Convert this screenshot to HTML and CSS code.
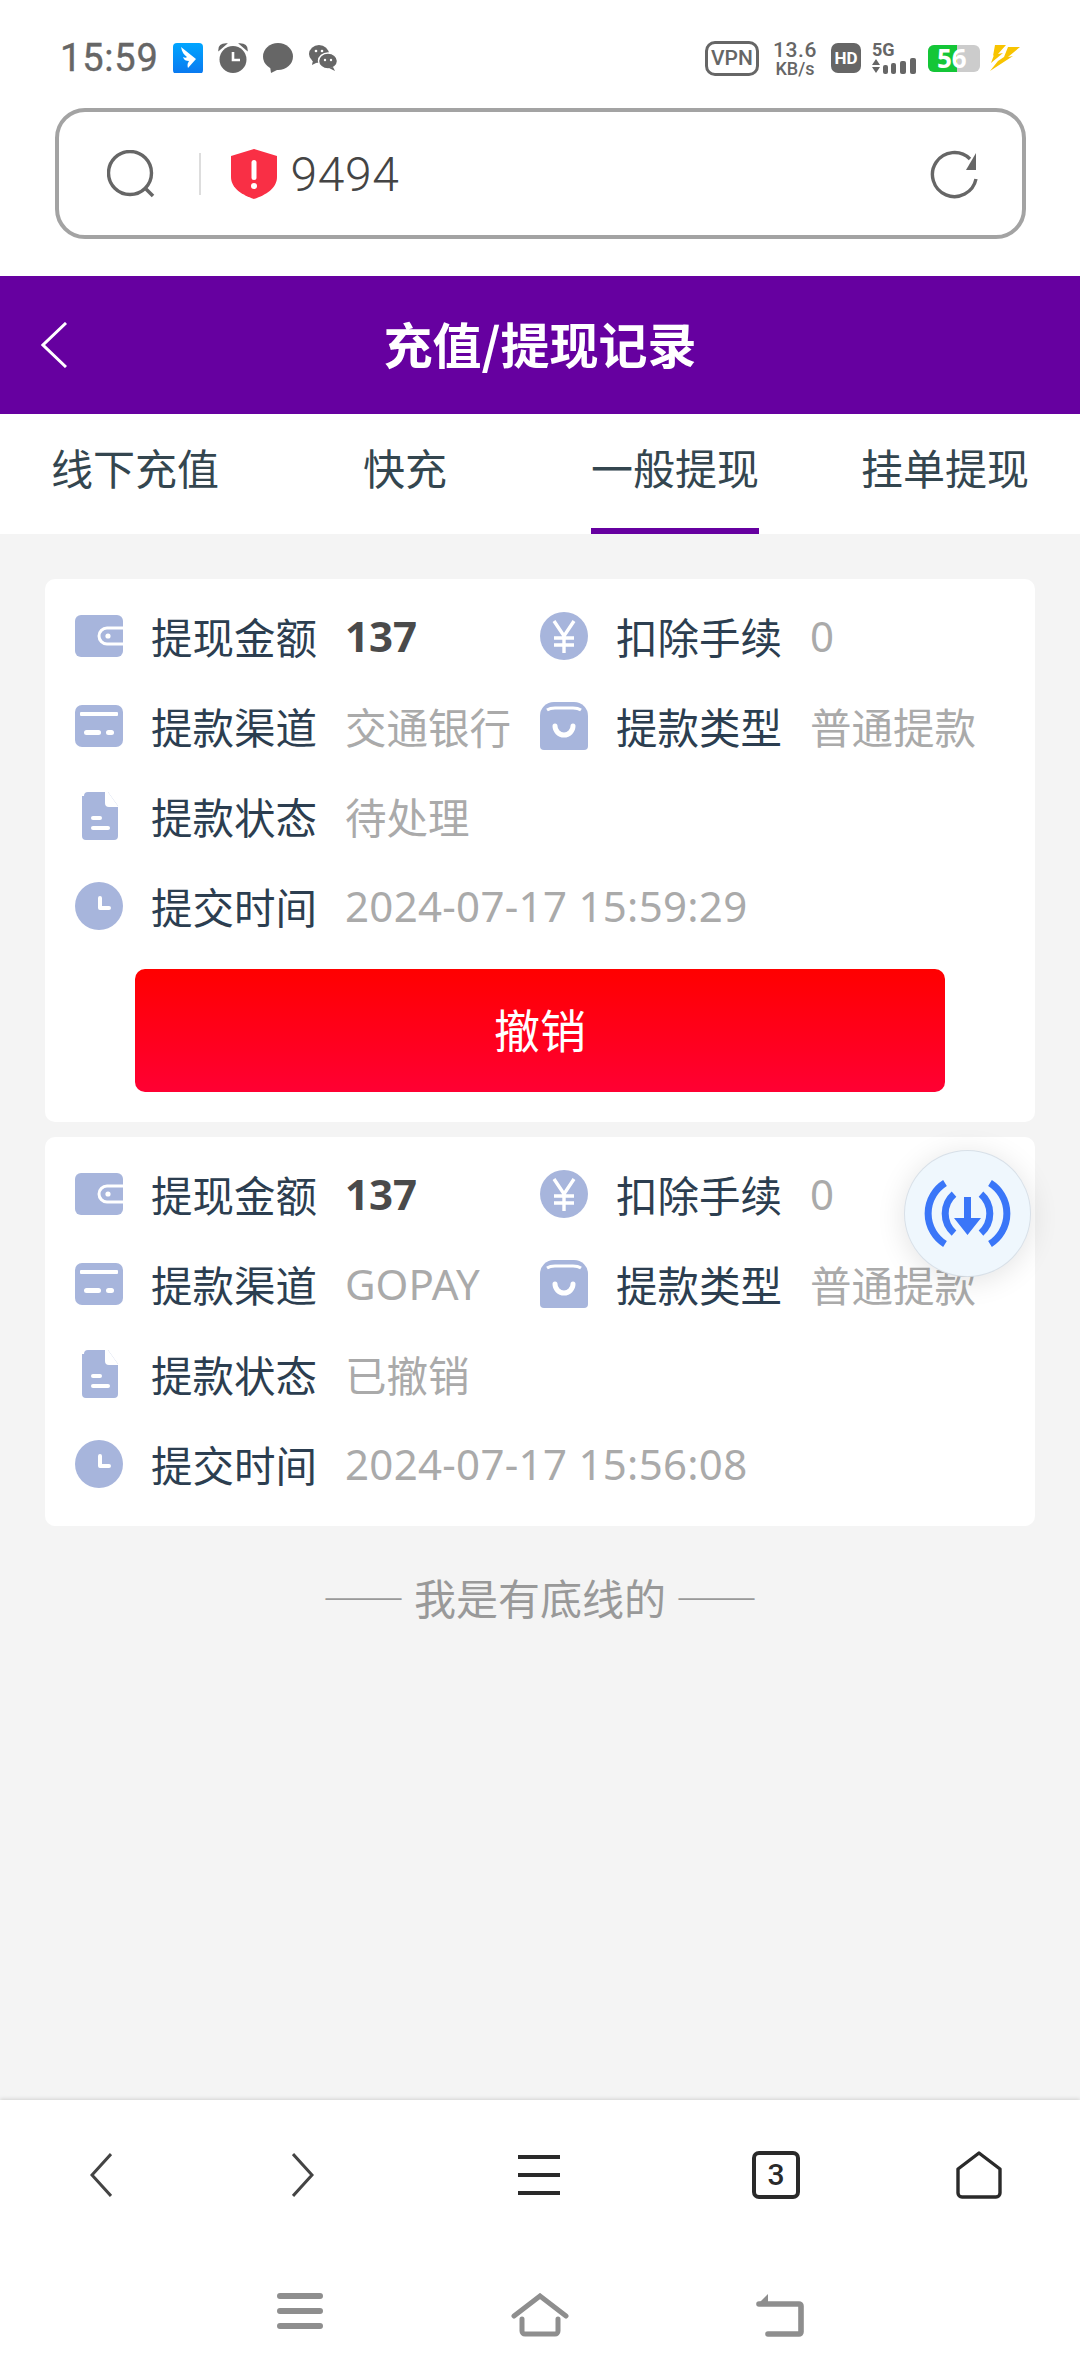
FILE: index.html
```html
<!DOCTYPE html>
<html lang="zh">
<head>
<meta charset="utf-8">
<title>充值/提现记录</title>
<link rel="stylesheet" href="styles.css">
</head>
<body>
<svg class="defs" width="0" height="0">
  <symbol id="i-wallet" viewBox="0 0 48 42">
    <rect width="48" height="42" rx="6" fill="#a7b5dc"/>
    <path d="M48 13H32a8 8 0 0 0 0 16h16" fill="none" stroke="#fff" stroke-width="3"/>
    <circle cx="33" cy="21" r="2.6" fill="#fff"/>
  </symbol>
  <symbol id="i-card" viewBox="0 0 48 42">
    <rect width="48" height="42" rx="7" fill="#a7b5dc"/>
    <rect x="5" y="7" width="38" height="4" rx="1" fill="#fff"/>
    <rect x="9" y="25" width="17" height="5" rx="2.5" fill="#fff"/>
    <rect x="31" y="25" width="8" height="5" rx="2.5" fill="#fff"/>
  </symbol>
  <symbol id="i-doc" viewBox="0 0 48 48">
    <path d="M9 4a4 4 0 0 1 4-4h20l10 14v30a4 4 0 0 1-4 4H11a4 4 0 0 1-4-4V4z" fill="#a7b5dc"/>
    <path d="M30 0h3l10 14v1H34a4 4 0 0 1-4-4z" fill="#fff"/>
    <rect x="16" y="24" width="11" height="4" rx="2" fill="#fff"/>
    <rect x="16" y="34" width="19" height="4" rx="2" fill="#fff"/>
  </symbol>
  <symbol id="i-clock" viewBox="0 0 48 48">
    <circle cx="24" cy="24" r="24" fill="#a7b5dc"/>
    <path d="M25 16v10h9" fill="none" stroke="#fff" stroke-width="4" stroke-linecap="round" stroke-linejoin="round"/>
  </symbol>
  <symbol id="i-yen" viewBox="0 0 48 48">
    <circle cx="24" cy="24" r="24" fill="#a7b5dc"/>
    <path d="M14 9l10 15L34 9M24 24v17M14 26h20M14 33h20" fill="none" stroke="#fff" stroke-width="3.4"/>
  </symbol>
  <symbol id="i-bag" viewBox="0 0 48 48">
    <path d="M14 0h20a14 14 0 0 1 14 14v30a4 4 0 0 1-4 4H4a4 4 0 0 1-4-4V14A14 14 0 0 1 14 0z" fill="#a7b5dc"/>
    <path d="M7 8c3-2 5-2 8-2h18c3 0 5 0 8 2" fill="none" stroke="#fff" stroke-width="3"/>
    <path d="M15 24a9 9 0 0 0 18 0" fill="none" stroke="#fff" stroke-width="5" stroke-linecap="round"/>
  </symbol>
</svg>

<header class="status">
  <div class="status-group">
    <span class="clock-text">15:59</span>
    <svg class="st-icon st-app" width="30" height="30" viewBox="0 0 30 30">
      <defs><linearGradient id="appg" x1="0" y1="0" x2="0" y2="1"><stop offset="0" stop-color="#00a6ff"/><stop offset="1" stop-color="#0a78f0"/></linearGradient></defs>
      <rect width="30" height="31" rx="4" fill="url(#appg)"/>
      <path d="M8 4l15 12-8 9c-1-4 0-5 1-7-3 0-5-1-6-4 2 1 3 1 4 0-3-2-5-5-6-10z" fill="#fff"/>
    </svg>
    <svg class="st-icon" width="30" height="30" viewBox="0 0 30 30">
      <circle cx="15" cy="16.5" r="13.5" fill="#666"/>
      <path d="M1 7c0-4 3-6 7-6L1 7zM29 7c0-4-3-6-7-6l7 6z" fill="#666" stroke="#666" stroke-width="1.4"/>
      <path d="M15 9v8h7" fill="none" stroke="#fff" stroke-width="2.6"/>
    </svg>
    <svg class="st-icon" width="30" height="30" viewBox="0 0 30 30">
      <ellipse cx="15" cy="13.5" rx="15" ry="13.5" fill="#666"/>
      <path d="M7 23l1 7 8-4z" fill="#666"/>
    </svg>
    <svg class="st-icon" width="30" height="30" viewBox="0 0 30 30">
      <ellipse cx="11" cy="11" rx="10" ry="9" fill="#666"/>
      <path d="M5 17l-1 5 6-3z" fill="#666"/>
      <ellipse cx="20" cy="18" rx="9.5" ry="8" fill="#666" stroke="#fff" stroke-width="1.4"/>
      <path d="M25 24l2 4-6-3z" fill="#666"/>
      <circle cx="8" cy="8" r="1.3" fill="#fff"/><circle cx="14" cy="8" r="1.3" fill="#fff"/>
      <circle cx="17" cy="17" r="1.2" fill="#fff"/><circle cx="23" cy="17" r="1.2" fill="#fff"/>
    </svg>
  </div>
  <div class="status-group status-right">
    <span class="vpn">VPN</span>
    <span class="speed"><b>13.6</b><i>KB/s</i></span>
    <span class="hd">HD</span>
    <span class="net">
      <span class="fiveg">5G</span>
      <svg width="45" height="16" viewBox="0 0 45 16">
        <path d="M0 7l4-6 4 6zM0 9h8l-4 6z" fill="#666"/>
        <rect x="11" y="7" width="5" height="9" rx="2" fill="#666"/>
        <rect x="19" y="5" width="5" height="11" rx="2" fill="#666"/>
        <rect x="28" y="3" width="6" height="13" rx="2" fill="#666"/>
        <rect x="38" y="0" width="6" height="16" rx="2" fill="#666"/>
      </svg>
    </span>
    <span class="battery"><span class="battery-fill"></span><span class="battery-num">56</span></span>
    <svg class="bolt" width="30" height="26" viewBox="0 0 30 26">
      <path d="M5 0h11L8 9l5-1L1 18l3-8-1 1z" fill="#f8c400"/>
      <path d="M18 2h12L18 12l5-1L0 26l8-10 6-4 4-1-4 1z" fill="#f8c400"/>
    </svg>
  </div>
</header>

<div class="address-wrap">
  <div class="address">
    <svg class="addr-search" width="48" height="48" viewBox="0 0 48 48">
      <circle cx="23" cy="23" r="21.5" fill="none" stroke="#666" stroke-width="3.4"/>
      <path d="M38 38l8 8" stroke="#666" stroke-width="3.6"/>
    </svg>
    <span class="addr-divider"></span>
    <svg class="addr-shield" width="46" height="50" viewBox="0 0 46 50">
      <path d="M23 0l23 7v21c0 11-11 18-23 22C11 46 0 39 0 28V7z" fill="#f92f45"/>
      <rect x="20.5" y="11" width="5" height="20" rx="2.5" fill="#fff"/>
      <circle cx="23" cy="37" r="3" fill="#fff"/>
    </svg>
    <span class="addr-text">9494</span>
    <svg class="addr-reload" width="48" height="50" viewBox="0 0 48 50">
      <path d="M46 30a22 22 0 1 1-6-20" fill="none" stroke="#666" stroke-width="3.4"/>
      <path d="M46 4v17H36z" fill="#666"/>
    </svg>
  </div>
</div>

<div class="titlebar">
  <svg class="title-back" width="26" height="46" viewBox="0 0 26 46">
    <path d="M25 1L2 23l23 22" fill="none" stroke="#fff" stroke-width="3"/>
  </svg>
  <h1 class="title">充值/提现记录</h1>
</div>

<nav class="tabs">
  <a class="tab">线下充值</a>
  <a class="tab">快充</a>
  <a class="tab tab-active">一般提现</a>
  <a class="tab">挂单提现</a>
</nav>

<main class="content">
  <section class="card">
    <div class="row">
      <div class="cell"><svg class="ic ic-short"><use href="#i-wallet"/></svg><span class="label">提现金额</span><span class="value value-strong">137</span></div>
      <div class="cell"><svg class="ic"><use href="#i-yen"/></svg><span class="label">扣除手续</span><span class="value">0</span></div>
    </div>
    <div class="row">
      <div class="cell"><svg class="ic ic-short"><use href="#i-card"/></svg><span class="label">提款渠道</span><span class="value value-cjk">交通银行</span></div>
      <div class="cell"><svg class="ic"><use href="#i-bag"/></svg><span class="label">提款类型</span><span class="value value-cjk">普通提款</span></div>
    </div>
    <div class="row">
      <div class="cell"><svg class="ic"><use href="#i-doc"/></svg><span class="label">提款状态</span><span class="value value-cjk">待处理</span></div>
    </div>
    <div class="row">
      <div class="cell"><svg class="ic"><use href="#i-clock"/></svg><span class="label">提交时间</span><span class="value value-date">2024-07-17 15:59:29</span></div>
    </div>
    <button class="revoke">撤销</button>
  </section>

  <section class="card">
    <div class="row">
      <div class="cell"><svg class="ic ic-short"><use href="#i-wallet"/></svg><span class="label">提现金额</span><span class="value value-strong">137</span></div>
      <div class="cell"><svg class="ic"><use href="#i-yen"/></svg><span class="label">扣除手续</span><span class="value">0</span></div>
    </div>
    <div class="row">
      <div class="cell"><svg class="ic ic-short"><use href="#i-card"/></svg><span class="label">提款渠道</span><span class="value">GOPAY</span></div>
      <div class="cell"><svg class="ic"><use href="#i-bag"/></svg><span class="label">提款类型</span><span class="value value-cjk">普通提款</span></div>
    </div>
    <div class="row">
      <div class="cell"><svg class="ic"><use href="#i-doc"/></svg><span class="label">提款状态</span><span class="value value-cjk">已撤销</span></div>
    </div>
    <div class="row">
      <div class="cell"><svg class="ic"><use href="#i-clock"/></svg><span class="label">提交时间</span><span class="value value-date">2024-07-17 15:56:08</span></div>
    </div>
  </section>

  <p class="end-note"><span class="dash">——</span> 我是有底线的 <span class="dash">——</span></p>
</main>

<footer class="browser-bar">
  <div class="toolbar">
    <svg width="22" height="44" viewBox="0 0 22 44"><path d="M21 1L2 22l19 21" fill="none" stroke="#444" stroke-width="3"/></svg>
    <svg width="22" height="44" viewBox="0 0 22 44"><path d="M1 1l19 21L1 43" fill="none" stroke="#444" stroke-width="3"/></svg>
    <svg width="42" height="42" viewBox="0 0 42 42"><path d="M0 3h42M0 21h42M0 39h42" stroke="#2a2a2a" stroke-width="4"/></svg>
    <span class="tab-count">3</span>
    <svg width="46" height="48" viewBox="0 0 46 48"><path d="M23 2L2 18v24a4 4 0 0 0 4 4h34a4 4 0 0 0 4-4V18z" fill="none" stroke="#2a2a2a" stroke-width="3.4" stroke-linejoin="round"/></svg>
  </div>
  <div class="sysnav">
    <svg width="46" height="36" viewBox="0 0 46 36"><path d="M3 3h40M3 18h40M3 33h40" stroke="#8e8e8e" stroke-width="6" stroke-linecap="round"/></svg>
    <svg width="58" height="44" viewBox="0 0 58 44"><path d="M3 23L29 3l26 20" fill="none" stroke="#8e8e8e" stroke-width="5" stroke-linecap="round"/><path d="M11 26v12a3 3 0 0 0 3 3h30a3 3 0 0 0 3-3V26" fill="none" stroke="#8e8e8e" stroke-width="5" stroke-linecap="round"/></svg>
    <svg width="48" height="44" viewBox="0 0 48 44"><path d="M3 11h40a2 2 0 0 1 2 2v26a2 2 0 0 1-2 2H12" fill="none" stroke="#8e8e8e" stroke-width="5.6" stroke-linecap="round"/><path d="M1 12L12 1v12z" fill="#8e8e8e"/></svg>
  </div>
</footer>

<div class="float-btn">
  <svg width="125" height="125" viewBox="0 0 125 125">
    <path d="M40 32a36 36 0 0 0 0 61M85 32a36 36 0 0 1 0 61M49 43a26 26 0 0 0 0 39M76 43a26 26 0 0 1 0 39" fill="none" stroke="#3a76f8" stroke-width="7"/>
    <path d="M59 46h7v21h10L62.500 84 49 67h10z" fill="#3a76f8"/>
  </svg>
</div>
</body>
</html>
```

FILE: styles.css
```css
* { box-sizing: border-box; }
html, body { margin: 0; padding: 0; }
body {
  position: relative;
  width: 1080px;
  height: 2376px;
  overflow: hidden;
  display: flex;
  flex-direction: column;
  background: #fff;
  font-family: "Noto Sans", "Noto Sans CJK SC", sans-serif;
  color: #2c3e50;
}
.defs { position: absolute; }

/* status bar */
.status {
  height: 108px;
  padding: 40px 60px 0;
  display: flex;
  justify-content: space-between;
  align-items: flex-start;
  color: #666;
}
.status-group { display: flex; align-items: center; height: 36px; gap: 15px; }
.status-right { gap: 14px; }
.clock-text {
  width: 98px;
  font-family: "Roboto", sans-serif;
  font-size: 38px;
  font-weight: 400;
  line-height: 36px;
  letter-spacing: .8px;
  -webkit-text-stroke: .4px #666;
}
.st-icon { flex: none; }
.vpn {
  width: 54px;
  height: 35px;
  border: 3px solid #666;
  border-radius: 10px;
  font: 500 21px/29px "Roboto", sans-serif;
  text-align: center;
}
.speed { display: flex; flex-direction: column; align-items: center; width: 44px; }
.speed b { font: 500 21px/20px "Roboto", sans-serif; letter-spacing: .6px; }
.speed i { font: 500 18px/17px "Roboto", sans-serif; }
.hd {
  width: 30px;
  height: 30px;
  border-radius: 7px;
  background: #666;
  color: #fff;
  font: 700 17px/30px "Roboto", sans-serif;
  text-align: center;
}
.net { display: flex; flex-direction: column; width: 45px; margin-left: -3px; }
.fiveg { font: 700 18px/16px "Roboto", sans-serif; }
.battery {
  position: relative;
  width: 52px;
  height: 27px;
  margin-left: -3px;
  border-radius: 6px;
  background: #ccc;
  color: #fff;
}
.battery-fill { display: block; width: 29px; height: 100%; border-radius: 6px 0 0 6px; background: #14c637; }
.battery-num {
  position: absolute;
  left: 9px;
  top: 0;
  font: 700 26px/27px "Noto Sans", sans-serif;
}
.bolt { margin-left: -4px; }

/* address bar */
.address-wrap { height: 168px; padding: 0 55px; }
.address {
  width: 971px;
  height: 131px;
  border: 4px solid #a3a3a3;
  border-radius: 30px;
  display: flex;
  align-items: center;
  padding: 0 44px 0 48px;
}
.addr-search { flex: none; }
.addr-divider { width: 1.500px; height: 42px; margin: 0 30px 0 44px; background: #ddd; }
.addr-shield { flex: none; }
.addr-text {
  margin-left: 14px;
  padding-top: 3px;
  flex: 1;
  font: 300 48px/1 "Roboto", sans-serif;
  color: #444;
  letter-spacing: 0.600px;
}
.addr-reload { flex: none; }

/* title bar */
.titlebar {
  position: relative;
  height: 138px;
  padding-bottom: 6px;
  background: #6600a0;
  display: flex;
  align-items: center;
  justify-content: center;
}
.title-back { position: absolute; left: 41px; top: 46px; }
.title {
  margin: 0;
  color: #fff;
  font: 700 49px/1 "Noto Sans CJK SC", sans-serif;
}

/* tabs */
.tabs { height: 120px; display: grid; grid-template-columns: repeat(4, 270px); }
.tab {
  position: relative;
  text-align: center;
  font: 400 42px/106px "Noto Sans CJK SC", sans-serif;
  color: #34464f;
}
.tab-active::after {
  content: "";
  position: absolute;
  left: 51px;
  bottom: 0;
  width: 168px;
  height: 6px;
  background: #6600a0;
}

/* content */
.content {
  flex: 1;
  background: #f4f4f4;
  padding: 45px 45px 0;
  display: flex;
  flex-direction: column;
  gap: 15px;
}
.card {
  background: #fff;
  border-radius: 10px;
  padding: 12px 30px 17px;
  display: flex;
  flex-direction: column;
}
.row { display: grid; grid-template-columns: 465px 1fr; height: 90px; }
.cell { display: flex; align-items: center; white-space: nowrap; }
.ic { width: 48px; height: 48px; flex: none; margin-right: 28px; }
.ic-short { height: 42px; }
.label { width: 166px; margin-right: 28px; font: 400 41.500px/84px "Noto Sans CJK SC", sans-serif; color: #2c3e50; }
.value { font-size: 42px; line-height: 90px; color: #aaa; }
.value-cjk { font-family: "Noto Sans CJK SC", sans-serif; font-size: 41.500px; line-height: 84px; }
.value-strong { font-weight: 700; color: #4a4a4a; }
.value-date { letter-spacing: .3px; }
.revoke {
  display: block;
  margin: 18px 60px 13px;
  height: 123px;
  padding: 0 0 6px;
  border: 0;
  border-radius: 10px;
  background: linear-gradient(#ff0000, #ff0033);
  color: #fff;
  font: 400 46px/1 "Noto Sans CJK SC", sans-serif;
}
.end-note {
  margin: 26px 0 0;
  text-align: center;
  font: 400 42px/60px "Noto Sans CJK SC", sans-serif;
  color: #999;
}
.dash { font-size: 41px; }

/* browser toolbar */
.browser-bar {
  height: 276px;
  background: #fff;
  box-shadow: 0 -1px 4px rgba(0, 0, 0, .14);
  position: relative;
}
.toolbar {
  height: 149px;
  display: grid;
  grid-template-columns: 202px 202px 270px 204px 202px;
  align-items: center;
  justify-items: center;
}
.tab-count {
  width: 48px;
  height: 48px;
  border: 4px solid #2a2a2a;
  border-radius: 7px;
  font: 500 30px/40px "Roboto", sans-serif;
  text-align: center;
  color: #2a2a2a;
}
.sysnav {
  height: 127px;
  display: grid;
  grid-template-columns: repeat(3, 240px);
  justify-content: center;
  justify-items: center;
  padding-top: 44px;
  align-items: start;
}

/* floating download button */
.float-btn {
  position: absolute;
  left: 905px;
  top: 1151px;
  width: 125px;
  height: 125px;
  border-radius: 50%;
  background: #eff7fd;
  box-shadow: 0 0 0 1px #d8e0e8, 0 4px 30px rgba(0, 0, 0, .12);
}
.float-btn svg { display: block; }
```
